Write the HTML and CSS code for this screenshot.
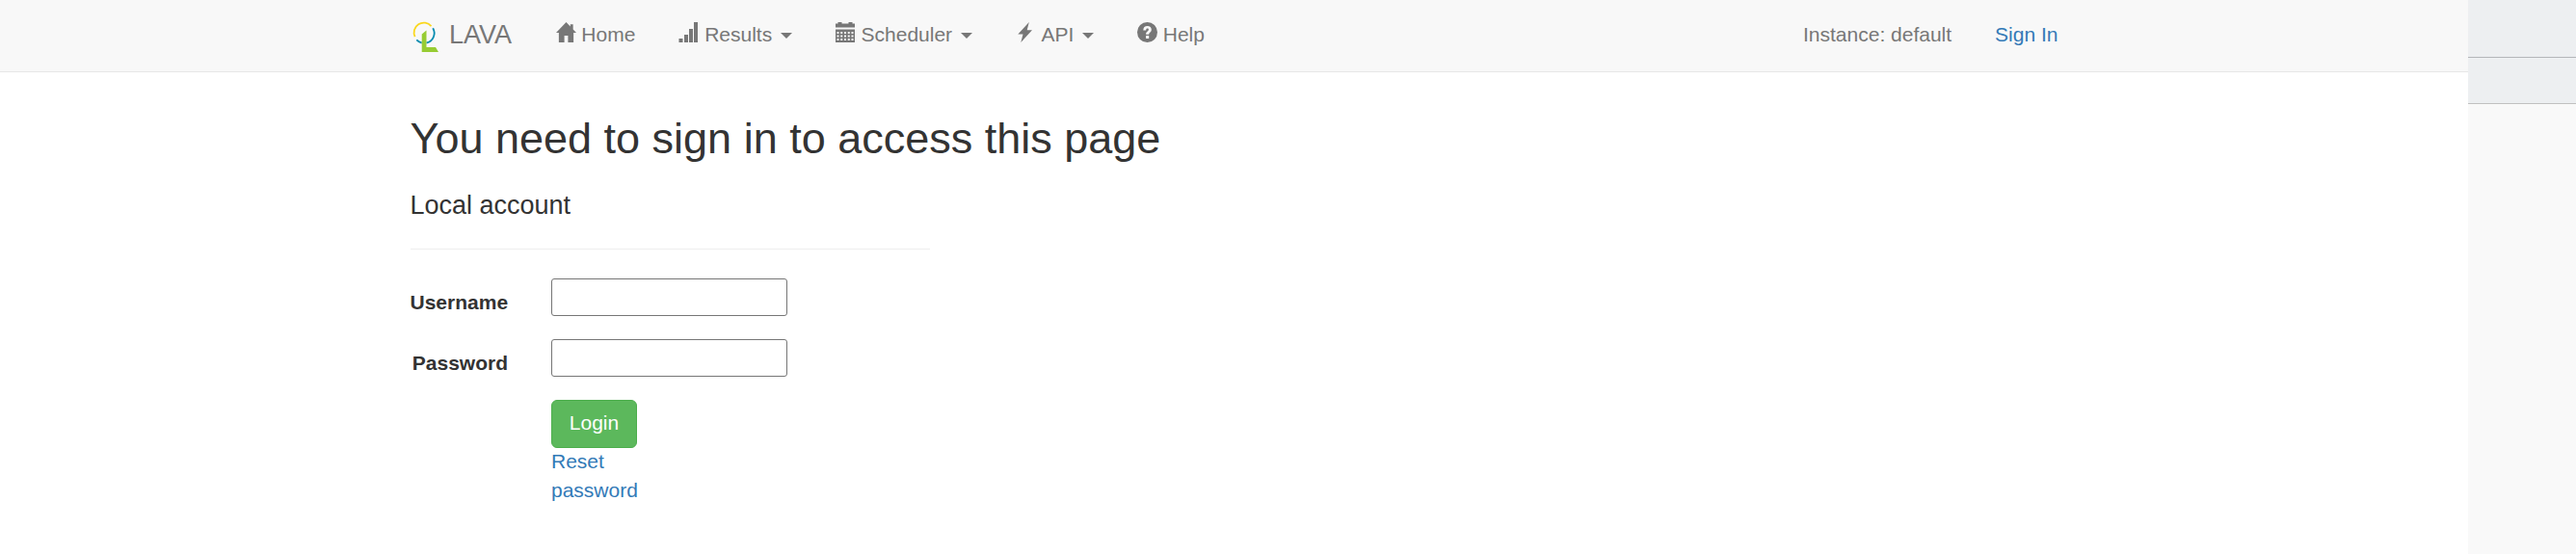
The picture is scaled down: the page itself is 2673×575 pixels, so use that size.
FILE: index.html
```html
<!DOCTYPE html>
<html lang="en">
<head>
<meta charset="utf-8">
<title>LAVA</title>
<link rel="stylesheet" href="styles.css">
</head>
<body>
<div class="page">
  <nav class="navbar">
    <div class="container nav-row">
      <a class="brand">
        <svg class="logo" viewBox="0 0 30 36" width="30" height="36">
          <g fill="none" stroke-width="1.8">
            <path stroke="#fad71e" d="M3.600 18.200A10.200 10.200 0 0 1 20.500 7.100"/>
            <path stroke="#078cb0" d="M22.200 9.300A10.200 10.200 0 0 1 15.500 24.500M5.300 21.400A10.200 10.200 0 0 0 10.700 24.500"/>
          </g>
          <path fill="#97cc33" d="M10.700 15.500l4.800-4V29H25l3 5H10.700z"/>
        </svg>
        <span>LAVA</span>
      </a>
      <a class="nav-item">
        <svg class="icon" viewBox="0 0 22 22" width="22" height="22"><path d="M11 0L0 11.500h3V22h6v-7.300h4V22h6V11.500h3L18.500 7.800V2.400h-3v2.300z"/></svg>
        <span>Home</span>
      </a>
      <a class="nav-item">
        <svg class="icon" viewBox="0 0 21 21" width="21" height="21"><path d="M.5 17h4v4h-4zM6 13h4v8H6zM11 7h4v14h-4zM16 0h4v21h-4z"/></svg>
        <span>Results</span><i class="caret"></i>
      </a>
      <a class="nav-item">
        <svg class="icon" viewBox="0 0 21 21" width="21" height="21">
          <path d="M0 1.500h2.500V0h4v1.500h7V0h4v1.500H20V5.500H0zM0 7.500h20V21H0z"/>
          <path class="grid-cells" d="M1.500 11h17M1.500 14.500h17M1.500 18h17"/>
        </svg>
        <span>Scheduler</span><i class="caret"></i>
      </a>
      <a class="nav-item">
        <svg class="icon" viewBox="0 0 21 21" width="21" height="21"><path d="M13.800 0L2.300 12.500H7.500L5.300 21 17 8.300h-5.300z"/></svg>
        <span>API</span><i class="caret"></i>
      </a>
      <a class="nav-item">
        <svg class="icon" viewBox="0 0 21 21" width="21" height="21"><circle cx="10.500" cy="10.500" r="10.500"/><path class="cut" d="M6.300 8.500C6.300 5.400 8 4 10.600 4c2.600 0 4.200 1.400 4.200 3.700 0 2.700-2.600 3-2.600 5H9.100c0-3.100 2.800-3.300 2.800-4.900 0-.8-.5-1.200-1.300-1.200-.9 0-1.400.6-1.400 1.900zM9.100 14h3.100v3.100H9.100z"/></svg>
        <span>Help</span>
      </a>
      <div class="nav-right">
        <span>Instance: default</span>
        <a class="link">Sign In</a>
      </div>
    </div>
  </nav>
  <main class="container content">
    <h2 class="title">You need to sign in to access this page</h2>
    <section class="account">
      <h4 class="subtitle">Local account</h4>
      <form class="form">
        <label class="label" for="user">Username</label>
        <input class="field" id="user" type="text">
        <label class="label" for="pass">Password</label>
        <input class="field" id="pass" type="password">
        <div class="actions">
          <button class="login" type="button">Login</button>
          <a class="link reset">Reset password</a>
        </div>
      </form>
    </section>
  </main>
</div>
<aside class="side">
  <div class="side-top"></div>
  <div class="side-bar"></div>
</aside>
</body>
</html>
```
FILE: styles.css
```css
* { box-sizing: border-box; }
body {
  margin: 0;
  height: 575px;
  display: flex;
  overflow: hidden;
  background: #fff;
  color: #333;
  font: 21px/30px "Liberation Sans", Arial, sans-serif;
}
.page { width: 2561px; flex: none; }
.container { width: 1755px; margin: 0 auto; padding: 0 22.5px; }
.navbar { height: 75px; background: #f8f8f8; border-bottom: 1px solid #e7e7e7; }
.nav-row { display: flex; align-items: flex-start; color: #777; }
.brand { display: flex; width: 128.5px; font-size: 27px; white-space: nowrap; }
.brand span { padding-top: 21px; margin-left: 9px; }
.logo { margin: 20px 0 0 1.5px; flex: none; }
.nav-item { display: flex; padding-top: 21px; margin: 0 22.5px; white-space: nowrap; }
.icon { width: 21px; height: 21px; margin: 2px 5.8px 0 0; fill: #777; overflow: visible; }
.cut { fill: #f8f8f8; }
.grid-cells { fill: none; stroke: #f8f8f8; stroke-width: 1.8; stroke-dasharray: 2 1.750; }
.caret {
  width: 12px;
  height: 6px;
  margin: 13px 0 0 8.6px;
  border: 6px solid transparent;
  border-top-color: #777;
  border-bottom: 0;
}
.nav-right { display: flex; gap: 45px; margin-left: auto; padding-top: 21px; }
.link { color: #337ab7; }
.title { margin: 0; padding-top: 44px; font-size: 45px; line-height: 50px; font-weight: 400; }
.account { width: 539.5px; }
.subtitle {
  margin: 0 0 30px;
  padding: 29px 0 30px;
  border-bottom: 1px solid #eee;
  font-size: 27px;
  line-height: 30px;
  font-weight: 400;
}
.form {
  display: grid;
  grid-template-columns: 101.5px 245px;
  grid-template-rows: 39px 39px auto;
  gap: 24px 45px;
}
.label { padding-top: 10px; font-weight: 700; text-align: right; }
.field {
  width: 245px;
  height: 39px;
  border: 1px solid #767676;
  border-radius: 3px;
  background: #fff;
  font: inherit;
  outline: 0;
}
.actions { grid-column: 2; width: 89px; }
.login {
  display: block;
  width: 89px;
  height: 50px;
  padding: 0 0 2px;
  border: 1px solid #4cae4c;
  border-radius: 6px;
  background: #5cb85c;
  color: #fff;
  font: inherit;
}
.reset { display: block; margin-top: -1px; }
.side { width: 112px; background: #f9f9f9; }
.side-top { height: 60px; background: #edeff1; border-bottom: 1px solid #b4b6b9; }
.side-bar { height: 48px; background: #edeff1; border-bottom: 1px solid #c0c0c0; }
```
